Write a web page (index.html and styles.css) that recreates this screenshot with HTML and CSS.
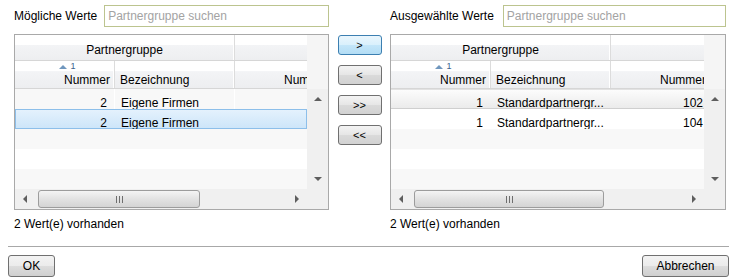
FILE: index.html
```html
<!DOCTYPE html>
<html>

<head>
  <meta charset="utf-8">
  <title>Partnergruppen auswählen</title>
  <link rel="stylesheet" href="styles.css">
</head>

<body>
  <div class="dialog">
    <div class="panels">

      <!-- Mögliche Werte -->
      <div class="panel panel-left">
        <div class="panel-top">
          <label for="search-left">Mögliche Werte</label>
          <input class="search" type="text" id="search-left" placeholder="Partnergruppe suchen">
        </div>
        <div class="grid">
          <div class="grid-main">
            <div class="head">
              <div class="head-row group-row">
                <div class="hcell group">Partnergruppe</div>
                <div class="hcell col3"></div>
              </div>
              <div class="head-row">
                <div class="hcell col1 sortable">
                  <div class="sort"><span class="sort-arrow"></span><span class="sort-num">1</span></div>
                  <div class="hlabel">Nummer</div>
                </div>
                <div class="hcell col2"><div class="hlabel">Bezeichnung</div></div>
                <div class="hcell col3 right"><div class="hlabel">Nummer</div></div>
              </div>
            </div>
            <div class="rows">
              <div class="row odd">
                <div class="cell col1 num">2</div>
                <div class="cell col2">Eigene Firmen</div>
                <div class="cell col3 num"></div>
              </div>
              <div class="row selected">
                <div class="cell col1 num">2</div>
                <div class="cell col2">Eigene Firmen</div>
                <div class="cell col3 num"></div>
              </div>
              <div class="row odd"></div>
              <div class="row"></div>
              <div class="row odd"></div>
            </div>
            <div class="hscroll">
              <div class="sbtn"><span class="arrow arrow-left"></span></div>
              <div class="htrack">
                <div class="thumb" style="width: 162px"><span class="grip"></span></div>
              </div>
              <div class="sbtn"><span class="arrow arrow-right"></span></div>
            </div>
          </div>
          <div class="grid-side">
            <div class="corner-top"></div>
            <div class="vscroll">
              <div class="sbtn"><span class="arrow arrow-up"></span></div>
              <div class="sbtn"><span class="arrow arrow-down"></span></div>
            </div>
            <div class="corner-bottom"></div>
          </div>
        </div>
        <div class="status">2 Wert(e) vorhanden</div>
      </div>

      <!-- Verschieben -->
      <div class="mover">
        <button class="move active">&gt;</button>
        <button class="move">&lt;</button>
        <button class="move">&gt;&gt;</button>
        <button class="move">&lt;&lt;</button>
      </div>

      <!-- Ausgewählte Werte -->
      <div class="panel panel-right">
        <div class="panel-top">
          <label for="search-right">Ausgewählte Werte</label>
          <input class="search" type="text" id="search-right" placeholder="Partnergruppe suchen">
        </div>
        <div class="grid">
          <div class="grid-main">
            <div class="head">
              <div class="head-row group-row">
                <div class="hcell group">Partnergruppe</div>
                <div class="hcell col3"></div>
              </div>
              <div class="head-row">
                <div class="hcell col1 sortable">
                  <div class="sort"><span class="sort-arrow"></span><span class="sort-num">1</span></div>
                  <div class="hlabel">Nummer</div>
                </div>
                <div class="hcell col2"><div class="hlabel">Bezeichnung</div></div>
                <div class="hcell col3 right"><div class="hlabel">Nummer</div></div>
              </div>
            </div>
            <div class="rows">
              <div class="row hover">
                <div class="cell col1 num">1</div>
                <div class="cell col2">Standardpartnergr...</div>
                <div class="cell col3 num">102</div>
              </div>
              <div class="row">
                <div class="cell col1 num">1</div>
                <div class="cell col2">Standardpartnergr...</div>
                <div class="cell col3 num">104</div>
              </div>
              <div class="row odd"></div>
              <div class="row"></div>
              <div class="row odd"></div>
            </div>
            <div class="hscroll">
              <div class="sbtn"><span class="arrow arrow-left"></span></div>
              <div class="htrack">
                <div class="thumb" style="width: 190px"><span class="grip"></span></div>
              </div>
              <div class="sbtn"><span class="arrow arrow-right"></span></div>
            </div>
          </div>
          <div class="grid-side">
            <div class="corner-top"></div>
            <div class="vscroll">
              <div class="sbtn"><span class="arrow arrow-up"></span></div>
              <div class="sbtn"><span class="arrow arrow-down"></span></div>
            </div>
            <div class="corner-bottom"></div>
          </div>
        </div>
        <div class="status">2 Wert(e) vorhanden</div>
      </div>

    </div>

    <div class="separator"></div>

    <div class="actions">
      <button class="btn btn-ok">OK</button>
      <button class="btn btn-cancel">Abbrechen</button>
    </div>
  </div>
</body>

</html>
```

FILE: styles.css
```css
/* Global Styles */
* {
  box-sizing: border-box;
}

body {
  margin: 0;
  background-color: #FFFFFF;
  font-family: "Liberation Sans", Arial, sans-serif;
  font-size: 12px;
  color: #000000;
}

.dialog {
  padding: 5px 8px 0 8px;
}

.panels {
  display: flex;
  padding-left: 6px;
}

/* Panel CSS */
.panel {
  display: flex;
  flex-direction: column;
}

.panel-left {
  width: 315px;
}

.panel-right {
  width: 336px;
}

.panel-top {
  display: flex;
  align-items: center;
  gap: 7px;
  height: 22px;
}

.panel-right .panel-top {
  gap: 9px;
}

.panel-top label {
  white-space: nowrap;
}

.search {
  flex: 1;
  min-width: 0;
  height: 22px;
  margin: 0;
  padding: 0 3px;
  border: 1px solid #BCC48F;
  font: inherit;
  color: #000000;
  outline: none;
}

.search::placeholder {
  color: #A3A3A3;
}

/* Grid CSS */
.grid {
  display: flex;
  height: 176px;
  margin-top: 7px;
  border: 1px solid #A9A9A9;
}

.grid-main {
  flex: 1;
  min-width: 0;
  display: flex;
  flex-direction: column;
  overflow: hidden;
}

.head-row {
  display: flex;
  border-bottom: 1px solid #D6D6D6;
  background: linear-gradient(to bottom, #FFFFFF 0%, #FFFFFF 38%, #F3F4F6 39%, #EDEEF0 100%);
}

.group-row {
  height: 26px;
}

.head-row:not(.group-row) {
  height: 28px;
}

.hcell {
  flex: none;
  display: flex;
  flex-direction: column;
  justify-content: flex-end;
  border-right: 1px solid #DCDCDC;
  box-shadow: inset -1px 0 0 #FFFFFF;
  white-space: nowrap;
  overflow: hidden;
}

.hcell.group {
  width: 220px;
  justify-content: center;
  align-items: center;
  padding-top: 4px;
}

.col1 {
  width: 100px;
}

.col2 {
  width: 120px;
}

.col3 {
  width: 100px;
}

.hlabel {
  line-height: 15px;
  padding: 0 4px 0 5px;
}

.col1 .hlabel,
.right .hlabel {
  text-align: right;
}

.sortable {
  justify-content: space-between;
}

.sort {
  display: flex;
  justify-content: center;
  align-items: flex-start;
  gap: 3px;
  height: 11px;
  padding-left: 6px;
}

.sort-arrow {
  width: 0;
  height: 0;
  margin-top: 4px;
  border-left: 4px solid transparent;
  border-right: 4px solid transparent;
  border-bottom: 4px solid #7097BE;
}

.sort-num {
  font-size: 9px;
  line-height: 10px;
  color: #3A5F8E;
}

/* Rows */
.rows {
  height: 100px;
}

.row {
  display: flex;
  height: 20px;
  background-color: #FFFFFF;
}

.row.odd {
  background-color: #F8F8F8;
}

.row.selected {
  background: linear-gradient(to bottom, #E5F2FD, #CCE5F9);
  box-shadow: inset 0 0 0 1px #8DBFEA;
}

.row.hover {
  background: linear-gradient(to bottom, #FDFDFD, #EAEAEA);
  box-shadow: inset 0 -1px 0 #CFCFCF, inset 0 1px 0 #E2E2E2;
}

.cell {
  flex: none;
  height: 20px;
  line-height: 20px;
  padding: 4px 6px 0 6px;
  white-space: nowrap;
  overflow: hidden;
  border-right: 1px solid transparent;
}

.row.odd .cell {
  border-right-color: #FFFFFF;
}

.cell.num {
  text-align: right;
  padding-right: 7px;
}

/* Scrollbars */
.grid-side {
  flex: none;
  width: 21px;
  display: flex;
  flex-direction: column;
}

.corner-top {
  height: 54px;
  background-color: #F5F5F5;
}

.vscroll {
  height: 100px;
  display: flex;
  flex-direction: column;
  justify-content: space-between;
  background-color: #F0F0F0;
}

.corner-bottom {
  flex: 1;
  background-color: #F0F0F0;
}

.hscroll {
  display: flex;
  height: 20px;
  background-color: #F0F0F0;
}

.sbtn {
  flex: none;
  width: 20px;
  height: 20px;
  display: flex;
  align-items: center;
  justify-content: center;
}

.vscroll .sbtn {
  width: 21px;
}

.htrack {
  flex: 1;
  padding: 1px 0 1px 3px;
}

.thumb {
  height: 18px;
  display: flex;
  align-items: center;
  justify-content: center;
  border: 1px solid #9C9C9C;
  border-radius: 3px;
  background: linear-gradient(to bottom, #F4F4F4, #E2E2E2 50%, #D4D4D4);
}

.grip {
  width: 7px;
  height: 7px;
  background: repeating-linear-gradient(to right, #6E6E6E 0, #6E6E6E 1px, transparent 1px, transparent 3px);
}

.arrow {
  width: 0;
  height: 0;
}

.arrow-up {
  border-left: 4px solid transparent;
  border-right: 4px solid transparent;
  border-bottom: 4px solid #5E5E5E;
}

.arrow-down {
  border-left: 4px solid transparent;
  border-right: 4px solid transparent;
  border-top: 4px solid #5E5E5E;
}

.arrow-left {
  border-top: 4px solid transparent;
  border-bottom: 4px solid transparent;
  border-right: 4px solid #5E5E5E;
}

.arrow-right {
  border-top: 4px solid transparent;
  border-bottom: 4px solid transparent;
  border-left: 4px solid #5E5E5E;
}

.status {
  margin-top: 7px;
  line-height: 15px;
}

/* Move Buttons */
.mover {
  width: 61px;
  flex: none;
  display: flex;
  flex-direction: column;
  align-items: center;
  gap: 10px;
  padding-top: 30px;
}

.move {
  width: 44px;
  height: 20px;
  margin: 0;
  padding: 0;
  border: 1px solid #707070;
  border-radius: 3px;
  background: linear-gradient(to bottom, #F3F3F3, #E6E6E6 50%, #DADADA 51%, #D2D2D2);
  font-family: "Liberation Sans", Arial, sans-serif;
  font-size: 11px;
  color: #000000;
}

.move.active {
  border-color: #3C7FB1;
  background: linear-gradient(to bottom, #EAF6FD, #D9F0FC 50%, #C4E6F9 51%, #B3DDF5);
}

/* Footer */
.separator {
  margin-top: 14px;
  border-top: 1px solid #A8A8A8;
}

.actions {
  display: flex;
  justify-content: space-between;
  margin-top: 8px;
}

.btn {
  height: 22px;
  margin: 0;
  padding: 0;
  border: 1px solid #707070;
  border-radius: 3px;
  background: linear-gradient(to bottom, #F3F3F3, #EBEBEB 50%, #DDDDDD 51%, #CFCFCF);
  font-family: "Liberation Sans", Arial, sans-serif;
  font-size: 12px;
  color: #000000;
}

.btn-ok {
  width: 47px;
}

.btn-cancel {
  width: 87px;
}
```
